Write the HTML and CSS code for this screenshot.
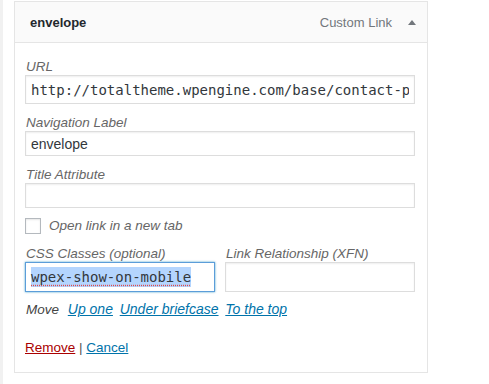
FILE: index.html
```html
<!DOCTYPE html>
<html lang="en">
<head>
  <meta charset="UTF-8" />
  <title>Menu item</title>
  <link rel="stylesheet" href="styles.css">
</head>
<body>

<div class="page">
  <div class="menu-item">
    <div class="item-bar">
      <span class="item-title">envelope</span>
      <span class="item-controls">
        <span class="item-type">Custom Link</span>
        <span class="item-toggle"></span>
      </span>
    </div>

    <div class="item-settings">
      <div class="field">
        <label class="field-label" for="url">URL</label>
        <input class="input code tall" id="url" type="text" value="http://totaltheme.wpengine.com/base/contact-page/">
      </div>

      <div class="field">
        <label class="field-label" for="nav-label">Navigation Label</label>
        <input class="input" id="nav-label" type="text" value="envelope">
      </div>

      <div class="field">
        <label class="field-label" for="title-attr">Title Attribute</label>
        <input class="input" id="title-attr" type="text" value="">
      </div>

      <label class="check-row">
        <span class="checkbox"></span>
        <span class="check-text">Open link in a new tab</span>
      </label>

      <div class="field-pair">
        <div class="field">
          <span class="field-label">CSS Classes (optional)</span>
          <div class="input code tall focused"><span class="selected">wpex-show-on-mobile</span></div>
        </div>
        <div class="field">
          <label class="field-label" for="xfn">Link Relationship (XFN)</label>
          <input class="input tall" id="xfn" type="text" value="">
        </div>
      </div>

      <div class="move-row">
        <span class="move-label">Move</span>
        <a href="#" class="move-link">Up one</a>
        <a href="#" class="move-link">Under briefcase</a>
        <a href="#" class="move-link">To the top</a>
      </div>

      <div class="item-actions">
        <a href="#" class="remove-link">Remove</a> <span class="sep">|</span> <a href="#" class="cancel-link">Cancel</a>
      </div>
    </div>
  </div>
</div>

</body>
</html>
```

FILE: styles.css
```css
* {
  box-sizing: border-box;
  margin: 0;
  padding: 0;
}

body {
  font-family: 'Liberation Sans', Arial, sans-serif;
  font-size: 13px;
  color: #444;
  background: #fff;
}

.page {
  min-height: 384px;
  border-left: 3px solid #f1f1f1;
  padding: 1px 0 0 11px;
}

.menu-item {
  width: 414px;
  border: 1px solid #e5e5e5;
  background: #fff;
}

.item-bar {
  height: 41px;
  background: #fafafa;
  border-bottom: 1px solid #e5e5e5;
  display: flex;
  align-items: center;
  justify-content: space-between;
  padding: 1px 11px 0 15px;
}

.item-title {
  font-weight: bold;
  color: #23282d;
}

.item-controls {
  display: flex;
  align-items: center;
  gap: 16px;
}

.item-type {
  color: #72777c;
}

.item-toggle {
  width: 0;
  height: 0;
  border-left: 4px solid transparent;
  border-right: 4px solid transparent;
  border-bottom: 5px solid #72777c;
}

.item-settings {
  padding: 15px 12px 16px 10px;
}

.field {
  display: flex;
  flex-direction: column;
  margin-bottom: 10px;
}

.field-label {
  font-style: italic;
  font-size: 13.5px;
  color: #666;
  line-height: 17px;
  padding-left: 1px;
}

.input {
  width: 100%;
  height: 25px;
  border: 1px solid #ddd;
  box-shadow: inset 0 1px 2px rgba(0, 0, 0, 0.07);
  background: #fff;
  color: #32373c;
  font-family: 'Liberation Sans', Arial, sans-serif;
  font-size: 14px;
  padding: 0 5px;
  outline: none;
}

.input.tall {
  height: 29px;
}

.code {
  font-family: 'DejaVu Sans Mono', 'Liberation Mono', monospace;
  font-size: 14px;
}

.focused {
  height: 30px;
  border-color: #5b9dd9;
  box-shadow: 0 0 2px rgba(30, 140, 190, 0.8);
  display: flex;
  align-items: center;
  white-space: nowrap;
  overflow: hidden;
}

.selected {
  background: #b4d5fe;
  line-height: 20px;
  text-decoration: underline dotted #e24b4b;
  text-underline-offset: 3px;
}

.check-row {
  display: flex;
  align-items: center;
  gap: 8px;
  margin: -1px 0 11px;
}

.checkbox {
  width: 16px;
  height: 16px;
  border: 1px solid #b4b9be;
  box-shadow: inset 0 1px 2px rgba(0, 0, 0, 0.1);
  background: #fff;
}

.check-text {
  font-style: italic;
  font-size: 13.5px;
  color: #666;
  line-height: 17px;
}

.field-pair {
  display: grid;
  grid-template-columns: 190px 190px;
  gap: 10px;
}

.field-pair .input.tall {
  height: 30px;
}

.move-row {
  line-height: 17px;
  font-style: italic;
  font-size: 13.5px;
  margin-top: -1px;
  padding-left: 1px;
}

.move-label {
  color: #444;
  margin-right: 2px;
}

.move-link {
  color: #0073aa;
  font-size: 14px;
  margin-left: 3px;
}

.item-actions {
  margin-top: 21px;
  line-height: 17px;
  font-size: 13.5px;
  color: #555;
}

.remove-link {
  color: #a00;
}

.cancel-link {
  color: #0073aa;
}
```
